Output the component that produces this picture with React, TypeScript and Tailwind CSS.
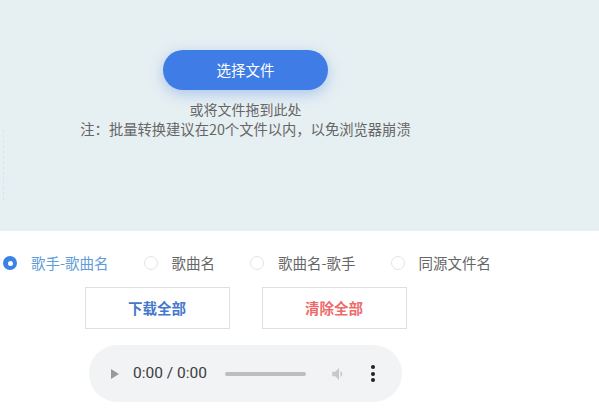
import { useState } from "react";

const font = { fontFamily: '"Noto Sans CJK SC", "Noto Sans", sans-serif' };

const options = ["歌手-歌曲名", "歌曲名", "歌曲名-歌手", "同源文件名"];

const Radio = ({
  label,
  checked,
  onClick,
}: {
  label: string;
  checked: boolean;
  onClick: () => void;
}) => (
  <label className="flex items-center gap-[14px] cursor-pointer" onClick={onClick}>
    {checked ? (
      <span className="w-[14px] h-[14px] rounded-full bg-[#3b82e6] flex items-center justify-center">
        <span className="w-[5px] h-[5px] rounded-full bg-white" />
      </span>
    ) : (
      <span className="w-[14px] h-[14px] rounded-full border border-[#e2e4e6] bg-white" />
    )}
    <span
      className={
        checked
          ? "text-[14.5px] leading-[20px] text-[#5f9bd8]"
          : "text-[14.5px] leading-[20px] text-[#666666]"
      }
    >
      {label}
    </span>
  </label>
);

const AudioBar = () => (
  <div className="mx-auto w-[313px] h-[57px] rounded-full bg-[#f1f3f4] flex items-center pl-[21px]">
    <svg width="10" height="12" viewBox="0 0 10 12" className="shrink-0">
      <path d="M1 1 L9 6 L1 11 Z" fill="#9a9a9a" />
    </svg>
    <span
      className="ml-[13px] text-[15.5px] text-[#3c3c3c] whitespace-nowrap"
      style={{ fontFamily: '"Roboto", "Liberation Sans", sans-serif' }}
    >
      0:00 / 0:00
    </span>
    <div className="ml-[18px] w-[81px] h-[4px] rounded-full bg-[#bdbdbd]" />
    <svg width="18" height="18" viewBox="0 0 24 24" className="ml-[24px] shrink-0">
      <path d="M3 9v6h4l5 5V4L7 9H3z" fill="#c8c8c8" />
      <path d="M16.5 12A4.5 4.5 0 0 0 14 7.97v8.05A4.5 4.5 0 0 0 16.5 12z" fill="#c8c8c8" />
    </svg>
    <div className="ml-[23px] flex flex-col items-center gap-[2.5px]">
      <span className="w-[4px] h-[4px] rounded-full bg-[#222]" />
      <span className="w-[4px] h-[4px] rounded-full bg-[#222]" />
      <span className="w-[4px] h-[4px] rounded-full bg-[#222]" />
    </div>
  </div>
);

export default function App() {
  const [selected, setSelected] = useState(0);

  return (
    <div className="w-[599px] h-[419px] bg-white overflow-hidden" style={font}>
      <section className="h-[231px] bg-[#e6eff2] relative">
        <div className="absolute left-[3px] top-[130px] h-[70px] border-l border-dashed border-[#dbe4e8]" />
        <div className="w-[491px] pt-[50px] flex flex-col items-center">
          <button className="w-[165px] h-[40px] rounded-full bg-[#3f7ce6] text-white text-[14.5px] shadow-[0_4px_14px_rgba(63,124,230,0.35)]">
            选择文件
          </button>
          <p className="mt-[10px] text-[14px] leading-[19px] text-[#666666]">
            或将文件拖到此处
          </p>
          <p className="text-[14.3px] leading-[19px] text-[#666666] whitespace-nowrap">
            注：批量转换建议在20个文件以内，以免浏览器崩溃
          </p>
        </div>
      </section>

      <div className="w-[491px]">
        <div className="mt-[22px] pl-[3px] flex items-center gap-[35px]">
          {options.map((o, i) => (
            <Radio key={o} label={o} checked={selected === i} onClick={() => setSelected(i)} />
          ))}
        </div>

        <div className="mt-[14px] flex justify-center gap-[32px]">
          <button className="w-[145px] h-[42px] border border-[#dcdfe3] bg-white text-[14.5px] font-bold text-[#4578cc]">
            下载全部
          </button>
          <button className="w-[145px] h-[42px] border border-[#dcdfe3] bg-white text-[14.5px] font-bold text-[#ec6b6b]">
            清除全部
          </button>
        </div>

        <div className="mt-[16px]">
          <AudioBar />
        </div>
      </div>
    </div>
  );
}
